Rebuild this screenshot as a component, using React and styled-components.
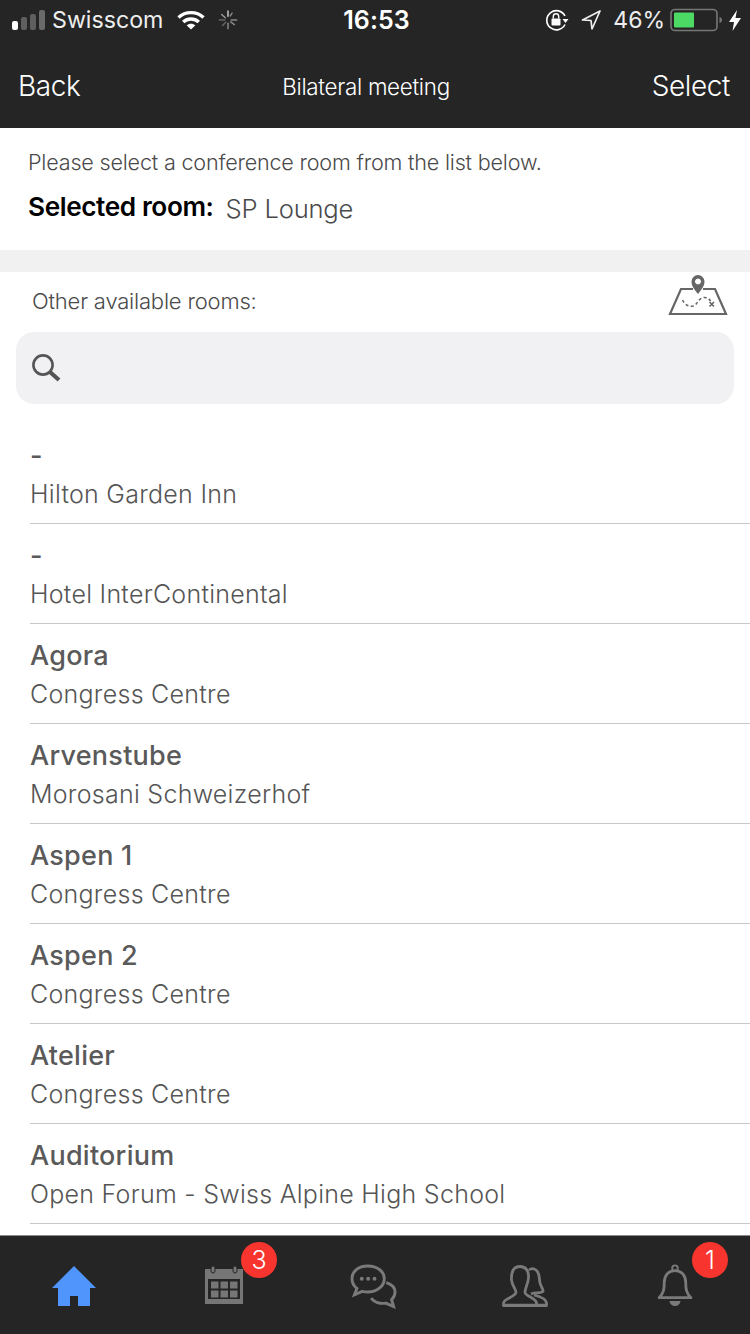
import React from "react";
import styled, { createGlobalStyle } from "styled-components";

const Global = createGlobalStyle`
  html, body { margin: 0; padding: 0; background: #fff; }
  body { font-family: Inter, "Liberation Sans", sans-serif; }
  * { box-sizing: border-box; }
`;

const Page = styled.div`
  width: 750px;
  height: 1334px;
  display: flex;
  flex-direction: column;
  overflow: hidden;
  background: #fff;
`;

const Header = styled.header`
  height: 128px;
  flex: none;
  background: #252525;
  color: #fff;
`;

const StatusBar = styled.div`
  height: 40px;
  padding: 0 9px 0 12px;
  display: grid;
  grid-template-columns: 1fr auto 1fr;
  align-items: center;
`;

const StatusLeft = styled.div`
  display: flex;
  align-items: center;
`;

const StatusRight = styled.div`
  display: flex;
  align-items: center;
  justify-content: flex-end;
`;

const Carrier = styled.span`
  font-size: 23.2px;
  font-weight: 400;
  margin: 0 14px 0 6px;
  color: #eee;
`;

const Clock = styled.span`
  font-size: 25px;
  font-weight: 600;
  letter-spacing: 0.1px;
`;

const Percent = styled.span`
  font-size: 23px;
  color: #eee;
  margin: 0 5px 0 12px;
`;

const Gap = styled.span`
  flex: none;
  width: ${(p) => p.$w}px;
`;

const NavBar = styled.div`
  height: 88px;
  padding: 3px 20px 0 18px;
  display: flex;
  justify-content: space-between;
  align-items: center;
`;

const NavAction = styled.span`
  font-size: 28px;
  font-weight: 300;
  letter-spacing: -0.4px;
`;

const NavTitle = styled.span`
  font-size: 22.4px;
  font-weight: 300;
  letter-spacing: -0.3px;
  position: relative;
  top: 1px;
`;

const Selection = styled.section`
  height: 122px;
  flex: none;
  padding: 21px 28px 0;
`;

const Hint = styled.p`
  margin: 0;
  font-size: 21.6px;
  font-weight: 300;
  line-height: 27px;
  letter-spacing: -0.2px;
  color: #4a4a4a;
`;

const SelectedRow = styled.div`
  display: flex;
  align-items: flex-start;
  margin-top: 14px;
  line-height: 34px;
`;

const SelectedLabel = styled.strong`
  font-size: 26.2px;
  font-weight: 600;
  letter-spacing: -0.4px;
  color: #000;
  margin-right: 12px;
`;

const SelectedValue = styled.span`
  font-size: 25.6px;
  font-weight: 300;
  letter-spacing: -0.2px;
  margin-top: 2px;
  color: #4a4a4a;
`;

const Divider = styled.div`
  height: 22px;
  flex: none;
  background: #f1f1f2;
`;

const OtherHead = styled.div`
  height: 60px;
  flex: none;
  padding: 0 22px 0 32px;
  display: flex;
  justify-content: space-between;
  align-items: center;
`;

const OtherLabel = styled.span`
  font-size: 22px;
  font-weight: 300;
  letter-spacing: -0.2px;
  position: relative;
  top: -1px;
  color: #4a4a4a;
`;

const MapSvg = styled.svg`
  margin-bottom: 14px;
`;

const SearchBox = styled.div`
  height: 72px;
  flex: none;
  margin: 0 16px;
  padding: 0 14px;
  border-radius: 18px;
  background: #f1f1f3;
  display: flex;
  align-items: center;
`;

const List = styled.ul`
  list-style: none;
  margin: 20px 0 0;
  padding: 0 0 0 30px;
  flex: 1;
  min-height: 0;
`;

const Row = styled.li`
  height: 100px;
  border-bottom: 1px solid #c8c8c8;
  padding-top: 14px;
`;

const RoomName = styled.div`
  font-size: 27px;
  font-weight: 500;
  line-height: 36px;
  letter-spacing: 0.25px;
  color: #5a5a5a;
`;

const RoomPlace = styled.div`
  font-size: 25px;
  font-weight: 300;
  line-height: 32px;
  letter-spacing: 0.27px;
  margin-top: 4px;
  color: #555;
`;

const TabBar = styled.nav`
  height: 99px;
  flex: none;
  background: #252525;
  border-top: 1px solid #8a8a8a;
  display: grid;
  grid-template-columns: 148px 151px 151px 150px 150px;
`;

const Tab = styled.div`
  position: relative;
  display: flex;
  justify-content: center;
  padding-top: ${(p) => p.$top}px;
`;

const Badge = styled.span`
  position: absolute;
  top: 6px;
  left: ${(p) => p.$left}px;
  width: 36px;
  height: 36px;
  border-radius: 50%;
  background: #f7352e;
  color: #fff;
  font-size: 25px;
  font-weight: 300;
  line-height: 36px;
  text-align: center;
`;

const Signal = () => (
  <svg width="34" height="22" viewBox="0 0 34 22">
    <rect x="0" y="12" width="6" height="9" rx="2" fill="#fff" />
    <rect x="9" y="8" width="6" height="13" rx="2" fill="#5f5f5f" />
    <rect x="18" y="5" width="6" height="16" rx="2" fill="#5f5f5f" />
    <rect x="27" y="1" width="6" height="20" rx="2" fill="#6a6a6a" />
  </svg>
);

const Wifi = () => (
  <svg width="28" height="20" viewBox="0 0 28 20" fill="none" stroke="#fff" strokeWidth="3.4">
    <path d="M1.5 7.5C8.5 1 19.5 1 26.5 7.5" />
    <path d="M6.2 12C10.5 8 17.5 8 21.8 12" />
    <path d="M14 19.5 L9.6 15.3C12 13.1 16 13.1 18.4 15.3Z" fill="#fff" stroke="none" />
  </svg>
);

const Spinner = () => (
  <svg width="20" height="20" viewBox="0 0 22 22" stroke="#8a8a8a" strokeWidth="1.6" strokeLinecap="round">
    <path d="M11 1v6" stroke="#ccc" />
    <path d="M15.5 3.5l-2 3" />
    <path d="M20.5 11h-6" />
    <path d="M18 16l-4-3" />
    <path d="M11 20.5v-6" />
    <path d="M5 17l3.5-3.5" stroke="#666" />
    <path d="M1.5 11h6" stroke="#666" />
    <path d="M4 5l4 3.5" stroke="#999" />
  </svg>
);

const RotationLock = () => (
  <svg width="24" height="22" viewBox="0 0 24 22" fill="none">
    <path d="M20 15.5A9.6 9.6 0 1 1 20 7" stroke="#fff" strokeWidth="1.6" />
    <path d="M17.5 10h6l-3 4z" fill="#fff" />
    <rect x="6.5" y="9.5" width="9" height="7" rx="1" fill="#fff" />
    <path d="M8.3 9.5V7.5a2.7 2.7 0 0 1 5.4 0v2" stroke="#fff" strokeWidth="1.4" />
  </svg>
);

const Location = () => (
  <svg width="20" height="20" viewBox="0 0 20 20" fill="none" stroke="#eee" strokeWidth="1.7" strokeLinejoin="round">
    <path d="M19 1 L1.5 10 L10 10.5 L11 19Z" />
  </svg>
);

const Battery = () => (
  <svg width="53" height="24" viewBox="0 0 53 24" fill="none">
    <rect x="1" y="1.5" width="46" height="21" rx="4" stroke="#777" strokeWidth="1.6" />
    <rect x="4" y="4.5" width="20" height="15" rx="1" fill="#4cd964" />
    <path d="M49.5 9c1.5 .4 2.5 1.5 2.5 3s-1 2.6-2.5 3z" fill="#777" />
  </svg>
);

const Bolt = () => (
  <svg width="12" height="21" viewBox="0 0 12 21" fill="#fff">
    <path d="M8 0 L0 12 H5 L3.5 21 L12 8 H6.5Z" />
  </svg>
);

const MapIcon = () => (
  <MapSvg width="60" height="42" viewBox="0 0 60 42" fill="none" stroke="#666">
    <path d="M25 15H13L2 40H58L47 15H35" strokeWidth="2.2" />
    <path fillRule="evenodd" fill="#666" stroke="none" d="M30 20C26 15 23.5 12 23.5 7.5a6.5 6.5 0 0 1 13 0C36.5 12 34 15 30 20Z M30 4.5a3 3 0 1 0 .01 0Z" />
    <path d="M14.5 26C17 31 21 33 25 32C30 30.5 30 24 36 23.5C40 23.5 41.5 25 43 28" strokeWidth="1.5" strokeDasharray="3 2.4" />
    <path d="M41.5 28l4.5 4.5M46 28l-4.5 4.5" strokeWidth="1.6" />
  </MapSvg>
);

const SearchIcon = () => (
  <svg width="32" height="32" viewBox="0 0 32 32" fill="none" stroke="#555">
    <circle cx="13" cy="13" r="9.6" strokeWidth="2.6" />
    <path d="M20 20l9 8" strokeWidth="4.2" />
  </svg>
);

const HomeIcon = () => (
  <svg width="44" height="40" viewBox="0 0 44 40" fill="#5095fb">
    <path d="M22 0L44 22H38V40H26V30H18V40H6V22H0Z" />
  </svg>
);

const CalendarIcon = () => (
  <svg width="38" height="38" viewBox="0 0 38 38">
    <path fillRule="evenodd" fill="#767676" d="M0 3H38V38H0Z M3 13V33H35V13Z" />
    <rect x="6" y="0" width="4" height="7" rx="2" fill="#767676" stroke="#252525" strokeWidth="1" />
    <rect x="28" y="0" width="4" height="7" rx="2" fill="#767676" stroke="#252525" strokeWidth="1" />
    {[6, 15.5, 25].map((x) =>
      [15.5, 24.5].map((y) => <rect key={`${x}-${y}`} x={x} y={y} width="7.5" height="7" fill="#767676" />)
    )}
  </svg>
);

const ChatIcon = () => (
  <svg width="49" height="45" viewBox="0 0 50 46" fill="none" stroke="#7a7a7a" strokeWidth="3">
    <path d="M18 2C8.5 2 2 7.5 2 15c0 4 2 7.5 5 10l-2.5 6.5 8-3.5c2 .5 3.5 .7 5.5 .7 9.5 0 17-6 17-13.7S27.5 2 18 2Z" />
    <path d="M37 19c5 1.5 9 5 9 10 0 3-1.5 5.5-3.500 7.500l2 7-8-3.500c-6 1-12-1-15-5" />
    <circle cx="12" cy="15" r="2" fill="#7a7a7a" stroke="none" />
    <circle cx="18.5" cy="15" r="2" fill="#7a7a7a" stroke="none" />
    <circle cx="25" cy="15" r="2" fill="#7a7a7a" stroke="none" />
  </svg>
);

const PeopleIcon = () => (
  <svg width="46" height="42" viewBox="0 0 46 42" fill="none" stroke="#7a7a7a" strokeWidth="2.8" strokeLinejoin="round">
    <path d="M1.5 40.5V38C2 33.5 13 32 14 27.5C14.5 25 10 21 9.5 15C9 6 12 1.5 18 1.5C24 1.5 27 6 26.5 13C26 19 23 23 23 27.5C23 31 34 33 34.5 38V40.5Z" />
    <path d="M27 5C29 3.5 32 3.5 34 5C38 8 37 14 38 18C39 22 41.5 24 41 26.5C38 29 33 27 29 29" />
    <path d="M32 30C36 31 44 33 44.5 38V40.5H34.5" />
    <path d="M1 40.5H45" strokeWidth="3.6" />
  </svg>
);

const BellIcon = () => (
  <svg width="36" height="43" viewBox="0 0 38 46" fill="none" stroke="#7a7a7a" strokeWidth="3">
    <circle cx="19" cy="4.5" r="3" strokeWidth="2" />
    <path d="M2 36C7 31 7.5 27 7.5 20C7.5 12 12 7 19 7S30.5 12 30.5 20C30.5 27 31 31 36 36Z" strokeLinejoin="round" />
    <path d="M13 39.5H25C24 43.5 21.5 45 19 45S14 43.5 13 39.5Z" fill="#7a7a7a" stroke="none" />
  </svg>
);

const rooms = [
  ["-", "Hilton Garden Inn"],
  ["-", "Hotel InterContinental"],
  ["Agora", "Congress Centre"],
  ["Arvenstube", "Morosani Schweizerhof"],
  ["Aspen 1", "Congress Centre"],
  ["Aspen 2", "Congress Centre"],
  ["Atelier", "Congress Centre"],
  ["Auditorium", "Open Forum - Swiss Alpine High School"],
];

export default function App() {
  return (
    <Page>
      <Global />
      <Header>
        <StatusBar>
          <StatusLeft>
            <Signal />
            <Carrier>Swisscom</Carrier>
            <Wifi />
            <Gap $w={13} />
            <Spinner />
          </StatusLeft>
          <Clock>16:53</Clock>
          <StatusRight>
            <RotationLock />
            <Gap $w={12} />
            <Location />
            <Percent>46%</Percent>
            <Battery />
            <Gap $w={6} />
            <Bolt />
          </StatusRight>
        </StatusBar>
        <NavBar>
          <NavAction>Back</NavAction>
          <NavTitle>Bilateral meeting</NavTitle>
          <NavAction>Select</NavAction>
        </NavBar>
      </Header>
      <Selection>
        <Hint>Please select a conference room from the list below.</Hint>
        <SelectedRow>
          <SelectedLabel>Selected room:</SelectedLabel>
          <SelectedValue>SP Lounge</SelectedValue>
        </SelectedRow>
      </Selection>
      <Divider />
      <OtherHead>
        <OtherLabel>Other available rooms:</OtherLabel>
        <MapIcon />
      </OtherHead>
      <SearchBox>
        <SearchIcon />
      </SearchBox>
      <List>
        {rooms.map(([name, place], i) => (
          <Row key={i}>
            <RoomName>{name}</RoomName>
            <RoomPlace>{place}</RoomPlace>
          </Row>
        ))}
      </List>
      <TabBar>
        <Tab $top={30}><HomeIcon /></Tab>
        <Tab $top={30}>
          <CalendarIcon />
          <Badge $left={93}>3</Badge>
        </Tab>
        <Tab $top={28}><ChatIcon /></Tab>
        <Tab $top={29}><PeopleIcon /></Tab>
        <Tab $top={28}>
          <BellIcon />
          <Badge $left={92}>1</Badge>
        </Tab>
      </TabBar>
    </Page>
  );
}
